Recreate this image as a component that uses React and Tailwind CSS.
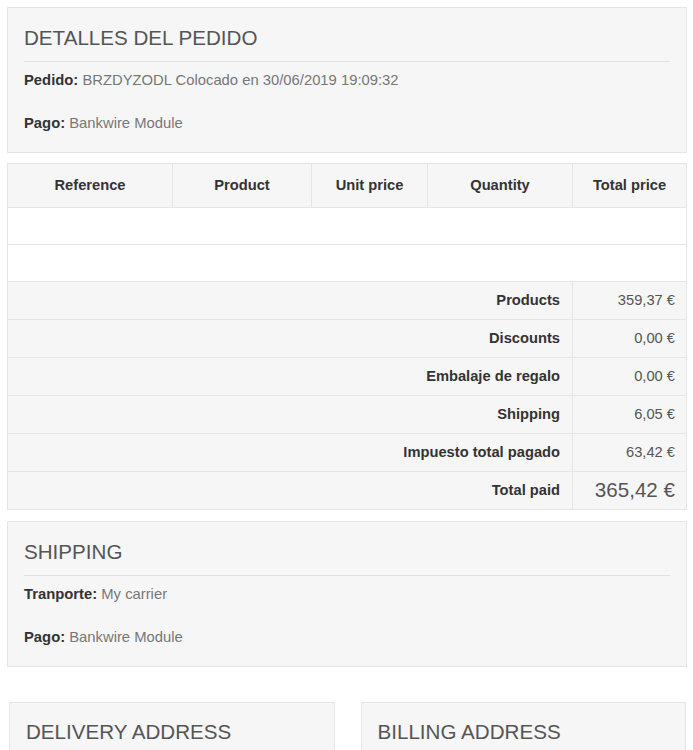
const Panel = ({ title, children }) => {
  return (
    <div className="border border-[#e5e5e5] bg-[#f6f6f6] px-4 pt-[19px] pb-[19px]">
      <h2 className="text-[20.6px] leading-[22px] text-[#555] pb-3 border-b border-[#e1e1e1]">
        {title}
      </h2>
      <div className="mt-2 flex flex-col gap-[23px]">{children}</div>
    </div>
  );
};

const Line = ({ label, value }) => (
  <p className="text-[14.8px] leading-5 text-[#777]">
    <strong className="text-[#333] font-bold">{label}</strong> {value}
  </p>
);

const summary = [
  ["Products", "359,37 €"],
  ["Discounts", "0,00 €"],
  ["Embalaje de regalo", "0,00 €"],
  ["Shipping", "6,05 €"],
  ["Impuesto total pagado", "63,42 €"],
];

const App = () => {
  return (
    <div className="bg-white min-h-screen font-['Liberation_Sans',Arial,sans-serif] pt-[7px]">
      <div className="pl-[7px] pr-[6px]">
        <Panel title="DETALLES DEL PEDIDO">
          <Line label="Pedido:" value="BRZDYZODL Colocado en 30/06/2019 19:09:32" />
          <Line label="Pago:" value="Bankwire Module" />
        </Panel>

        <table className="mt-[10px] w-full border-collapse border border-[#e5e5e5] text-[14.7px] text-[#333]">
          <thead>
            <tr className="h-[44px] bg-[#f6f6f6]">
              <th className="w-[165px] border border-[#e5e5e5] font-bold">Reference</th>
              <th className="w-[139px] border border-[#e5e5e5] font-bold">Product</th>
              <th className="w-[116px] border border-[#e5e5e5] font-bold">Unit price</th>
              <th className="w-[145px] border border-[#e5e5e5] font-bold">Quantity</th>
              <th className="border border-[#e5e5e5] font-bold">Total price</th>
            </tr>
          </thead>
          <tbody>
            <tr className="h-[37px] bg-white">
              <td colSpan={5} className="border border-[#e5e5e5]"></td>
            </tr>
            <tr className="h-[37px] bg-white">
              <td colSpan={5} className="border border-[#e5e5e5]"></td>
            </tr>
            {summary.map(([label, value]) => (
              <tr key={label} className="h-[38px] bg-[#f6f6f6]">
                <td colSpan={4} className="border border-[#e5e5e5] text-right pr-3 font-bold">
                  {label}
                </td>
                <td className="border border-[#e5e5e5] text-right pr-[11px] text-[#555]">{value}</td>
              </tr>
            ))}
            <tr className="h-[38px] bg-[#f6f6f6]">
              <td colSpan={4} className="border border-[#e5e5e5] text-right pr-3 font-bold">
                Total paid
              </td>
              <td className="border border-[#e5e5e5] text-right pr-[11px] text-[20.6px] text-[#555]">
                365,42 €
              </td>
            </tr>
          </tbody>
        </table>

        <div className="mt-[11px]">
          <Panel title="SHIPPING">
            <Line label="Tranporte:" value="My carrier" />
            <Line label="Pago:" value="Bankwire Module" />
          </Panel>
        </div>
      </div>

      <div className="mt-[35px] grid grid-cols-2 gap-[26px] pl-[9px] pr-[7px]">
        <div className="border border-[#e5e5e5] bg-[#f6f6f6] px-4 pt-[18px] pb-4">
          <h3 className="text-[20.6px] leading-[22px] text-[#555] pb-3 border-b border-[#e1e1e1]">
            DELIVERY ADDRESS
          </h3>
          <p className="mt-2 text-[14.8px] leading-5 text-[#777]">My carrier</p>
        </div>
        <div className="border border-[#e5e5e5] bg-[#f6f6f6] px-4 pt-[18px] pb-4">
          <h3 className="text-[20.6px] leading-[22px] text-[#555] pb-3 border-b border-[#e1e1e1]">
            BILLING ADDRESS
          </h3>
          <p className="mt-2 text-[14.8px] leading-5 text-[#777]">Bankwire Module</p>
        </div>
      </div>
    </div>
  );
};

export default App;
